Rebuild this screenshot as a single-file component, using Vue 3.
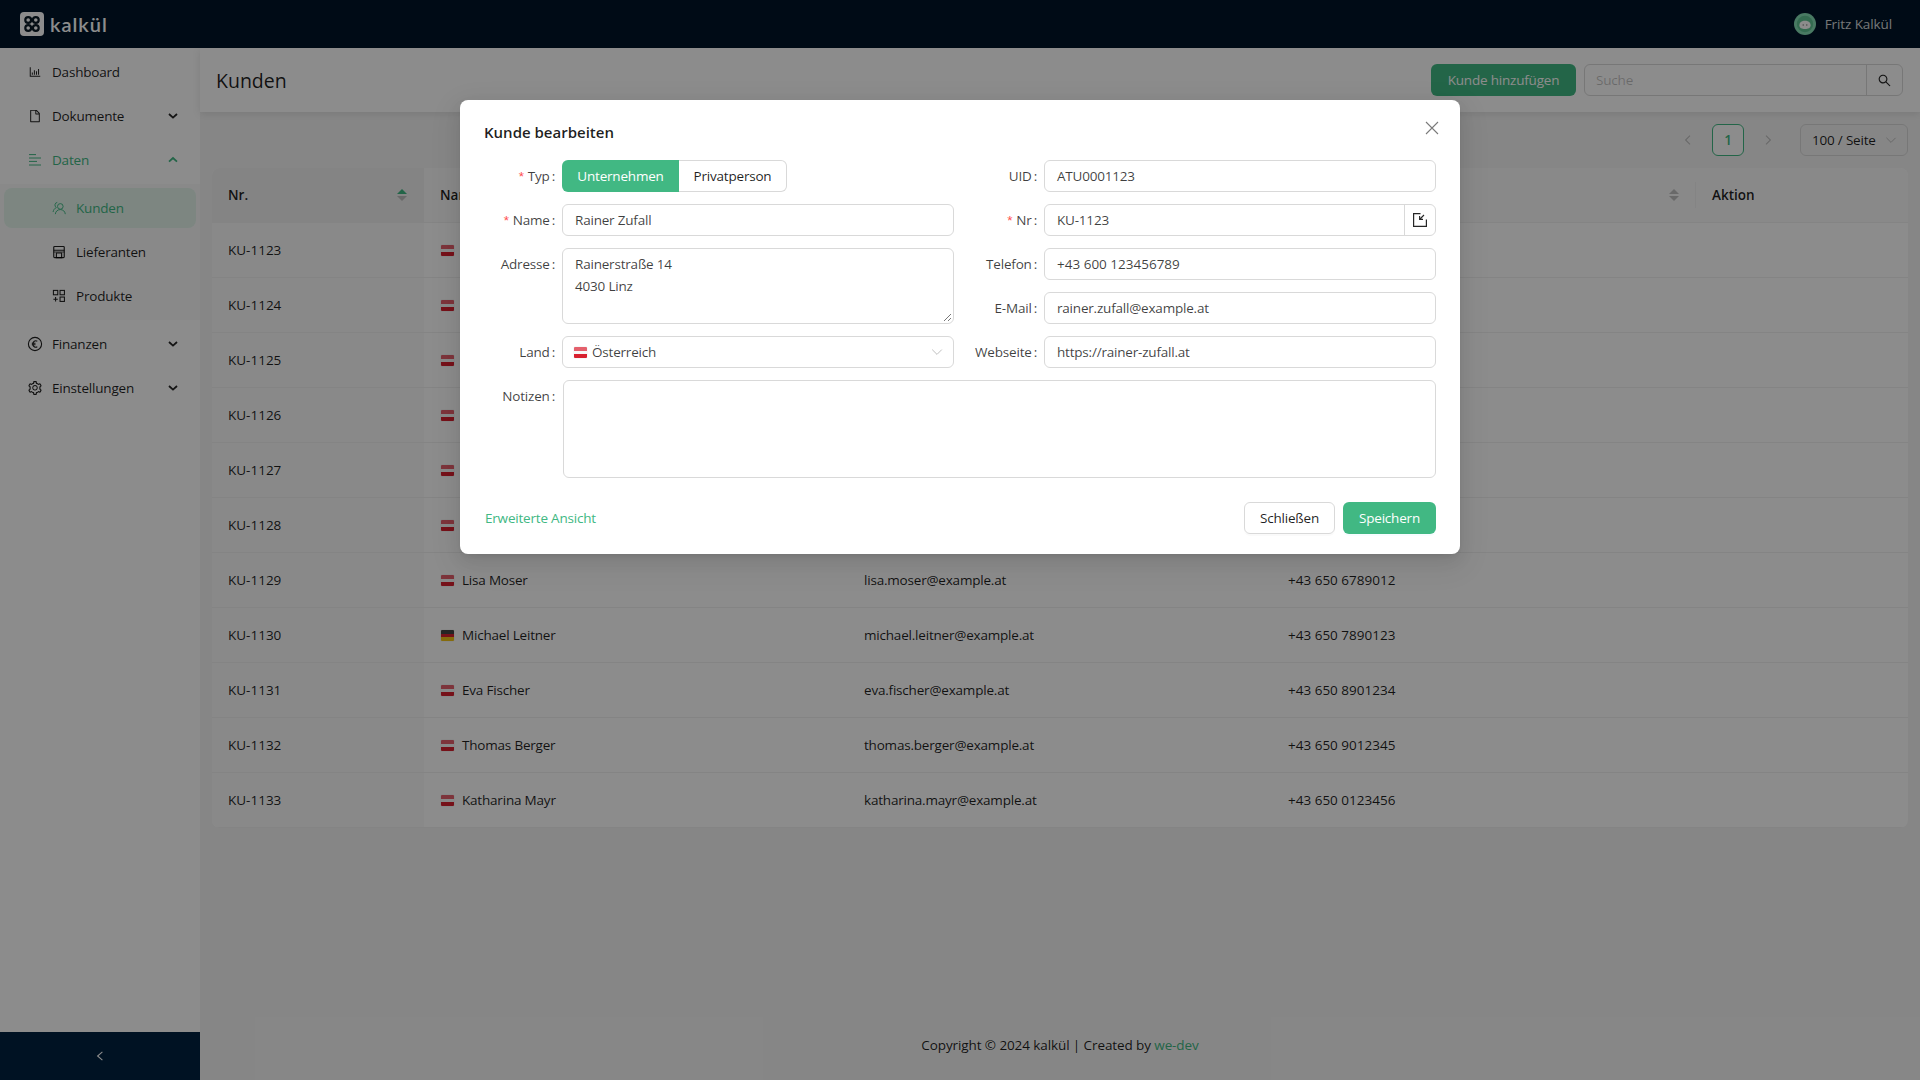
<script setup>
const menuTop = [
  { label: 'Dashboard', icon: 'chart' },
  { label: 'Dokumente', icon: 'file', arrow: 'down' },
]
const subItems = [
  { label: 'Kunden', icon: 'users', active: true },
  { label: 'Lieferanten', icon: 'shop' },
  { label: 'Produkte', icon: 'product' },
]
const menuBottom = [
  { label: 'Finanzen', icon: 'euro', arrow: 'down' },
  { label: 'Einstellungen', icon: 'gear', arrow: 'down' },
]
/* Rows 1123-1128 lie behind the dialog: only their number and flag can be seen. */
const rows = [
  ['KU-1123', 'at', '', '', ''],
  ['KU-1124', 'at', '', '', ''],
  ['KU-1125', 'at', '', '', ''],
  ['KU-1126', 'at', '', '', ''],
  ['KU-1127', 'at', '', '', ''],
  ['KU-1128', 'at', '', '', ''],
  ['KU-1129', 'at', 'Lisa Moser', 'lisa.moser@example.at', '+43 650 6789012'],
  ['KU-1130', 'de', 'Michael Leitner', 'michael.leitner@example.at', '+43 650 7890123'],
  ['KU-1131', 'at', 'Eva Fischer', 'eva.fischer@example.at', '+43 650 8901234'],
  ['KU-1132', 'at', 'Thomas Berger', 'thomas.berger@example.at', '+43 650 9012345'],
  ['KU-1133', 'at', 'Katharina Mayr', 'katharina.mayr@example.at', '+43 650 0123456'],
]
const paths = {
  chart: 'M888 792H200V168c0-4.4-3.6-8-8-8h-56c-4.4 0-8 3.6-8 8v688c0 4.4 3.6 8 8 8h752c4.4 0 8-3.6 8-8v-56c0-4.4-3.6-8-8-8zm-600-80h56c4.4 0 8-3.6 8-8V560c0-4.4-3.6-8-8-8h-56c-4.4 0-8 3.6-8 8v144c0 4.4 3.6 8 8 8zm152 0h56c4.4 0 8-3.6 8-8V384c0-4.4-3.6-8-8-8h-56c-4.4 0-8 3.6-8 8v320c0 4.4 3.6 8 8 8zm152 0h56c4.4 0 8-3.6 8-8V462c0-4.4-3.6-8-8-8h-56c-4.4 0-8 3.6-8 8v242c0 4.4 3.6 8 8 8zm152 0h56c4.4 0 8-3.6 8-8V304c0-4.4-3.6-8-8-8h-56c-4.4 0-8 3.6-8 8v400c0 4.4 3.6 8 8 8z',
  file: 'M854.6 288.6L639.4 73.4c-6-6-14.1-9.4-22.6-9.4H192c-17.7 0-32 14.3-32 32v832c0 17.7 14.3 32 32 32h640c17.7 0 32-14.3 32-32V311.3c0-8.5-3.4-16.7-9.4-22.7zM790.2 326H602V137.8L790.2 326zm1.8 562H232V136h302v216a42 42 0 0042 42h216v494z',
  gear: 'M924.8 625.7l-65.5-56c3.1-19 4.7-38.4 4.7-57.8s-1.6-38.8-4.7-57.8l65.5-56a32.03 32.03 0 009.3-35.2l-.9-2.6a443.74 443.74 0 00-79.7-137.9l-1.8-2.1a32.12 32.12 0 00-35.1-9.5l-81.3 28.9c-30-24.6-63.5-44-99.7-57.6l-15.7-85a32.05 32.05 0 00-25.8-25.7l-2.7-.5c-52.1-9.4-106.9-9.4-159 0l-2.7.5a32.05 32.05 0 00-25.8 25.7l-15.8 85.4a351.86 351.86 0 00-99 57.4l-81.9-29.1a32 32 0 00-35.1 9.5l-1.8 2.1a446.02 446.02 0 00-79.7 137.9l-.9 2.6c-4.5 12.5-.8 26.5 9.3 35.2l66.3 56.6c-3.1 18.8-4.6 38-4.6 57.1 0 19.2 1.5 38.4 4.6 57.1L99 625.5a32.03 32.03 0 00-9.3 35.2l.9 2.6c18.1 50.4 44.9 96.9 79.7 137.9l1.8 2.1a32.12 32.12 0 0035.1 9.5l81.9-29.1c29.8 24.5 63.1 43.9 99 57.4l15.8 85.4a32.05 32.05 0 0025.8 25.7l2.7.5a449.4 449.4 0 00159 0l2.7-.5a32.05 32.05 0 0025.8-25.7l15.7-85a350 350 0 0099.7-57.6l81.3 28.9a32 32 0 0035.1-9.5l1.8-2.1c34.8-41.1 61.6-87.5 79.7-137.9l.9-2.6c4.5-12.3.8-26.3-9.3-35zM788.3 465.9c2.5 15.1 3.8 30.6 3.8 46.1s-1.3 31-3.8 46.1l-6.6 40.1 74.7 63.9a370.03 370.03 0 01-42.6 73.6L721 702.8l-31.4 25.8c-23.9 19.6-50.5 35-79.3 45.8l-38.1 14.3-17.9 97a377.5 377.5 0 01-85 0l-17.9-97.2-37.8-14.5c-28.5-10.8-55-26.2-78.7-45.7l-31.4-25.9-93.4 33.2c-17-22.9-31.2-47.6-42.6-73.6l75.5-64.5-6.5-40c-2.4-14.9-3.7-30.3-3.7-45.5 0-15.3 1.2-30.6 3.7-45.5l6.5-40-75.5-64.5c11.3-26.1 25.6-50.7 42.6-73.6l93.4 33.2 31.4-25.9c23.7-19.5 50.2-34.9 78.7-45.7l37.9-14.3 17.9-97.2c28.1-3.2 56.8-3.2 85 0l17.9 97 38.1 14.3c28.7 10.8 55.4 26.2 79.3 45.8l31.4 25.8 92.8-32.9c17 22.9 31.2 47.6 42.6 73.6L781.8 426l6.5 39.9zM512 326c-97.2 0-176 78.8-176 176s78.8 176 176 176 176-78.8 176-176-78.8-176-176-176zm79.2 255.2A111.6 111.6 0 01512 614c-29.9 0-58-11.7-79.2-32.8A111.6 111.6 0 01400 502c0-29.9 11.7-58 32.8-79.2C454 401.6 482.1 390 512 390c29.9 0 58 11.6 79.2 32.8A111.6 111.6 0 01624 502c0 29.9-11.7 58-32.8 79.2z',
  search: 'M909.6 854.5L649.9 594.8C690.2 542.7 712 479 712 412c0-80.2-31.3-155.4-87.9-212.1-56.6-56.7-132-87.9-212.1-87.9s-155.5 31.3-212.1 87.9C143.2 256.5 112 331.8 112 412c0 80.1 31.3 155.5 87.9 212.1C256.5 680.8 331.8 712 412 712c67 0 130.6-21.8 182.7-62l259.7 259.6a8.2 8.2 0 0011.6 0l43.6-43.5a8.2 8.2 0 000-11.6zM570.4 570.4C528 612.7 471.8 636 412 636s-116-23.3-158.4-65.6C211.3 528 188 471.8 188 412s23.3-116.1 65.6-158.4C296 211.3 352.2 188 412 188s116.1 23.2 158.4 65.6S636 352.2 636 412s-23.3 116.1-65.6 158.4z',
}
</script>

<template>
  <div class="app">
    <header class="topbar">
      <div class="brand">
        <span class="logo">
          <svg viewBox="0 0 24 24" width="24" height="24" fill="none" stroke="#0a1a26" stroke-width="2.2">
            <circle cx="8.2" cy="8" r="2.9" /><circle cx="15.8" cy="8" r="2.9" />
            <circle cx="8.2" cy="16" r="2.9" /><circle cx="15.8" cy="16" r="2.9" />
          </svg>
        </span>
        <span class="brand-name">kalkül</span>
      </div>
      <div class="user">
        <svg class="avatar" viewBox="0 0 22 22" width="22" height="22">
          <circle cx="11" cy="11" r="11" fill="#86deb4" />
          <circle cx="11" cy="11" r="8.2" fill="#5fc493" />
          <path d="M5.4 12.2c0-2.9 2.5-4.4 5.6-4.4s5.6 1.5 5.6 4.4-2.5 3.8-5.6 3.8-5.6-.9-5.6-3.8z" fill="#fff" />
          <circle cx="9.2" cy="12" r=".7" fill="#777" /><circle cx="12.8" cy="12" r=".7" fill="#777" />
        </svg>
        <span>Fritz Kalkül</span>
      </div>
    </header>

    <div class="body">
      <aside class="sider">
        <nav class="menu">
          <div v-for="m in menuTop" :key="m.label" class="item">
            <svg v-if="m.icon === 'chart'" class="ico" viewBox="0 0 1024 1024"><path :d="paths.chart" /></svg>
            <svg v-else class="ico" viewBox="0 0 1024 1024"><path :d="paths.file" /></svg>
            <span class="item-label">{{ m.label }}</span>
            <svg v-if="m.arrow" class="arrow" viewBox="0 0 12 12"><path d="M2 4l4 3.6L10 4" /></svg>
          </div>

          <div class="item open">
            <svg class="ico" viewBox="0 0 14 14" fill="none" stroke="currentColor" stroke-width="1">
              <path d="M1 1.6h7M1 5h12M1 8.4h8M1 12h12" />
            </svg>
            <span class="item-label">Daten</span>
            <svg class="arrow" viewBox="0 0 12 12"><path d="M2 7.6L6 4l4 3.6" /></svg>
          </div>
          <div class="sub">
            <div v-for="s in subItems" :key="s.label" class="item subitem" :class="{ active: s.active }">
              <svg v-if="s.icon === 'users'" class="ico" viewBox="0 0 16 16" fill="none" stroke="currentColor" stroke-width="1.1">
                <circle cx="9.5" cy="6.2" r="3.2" />
                <path d="M3.8 15c.3-3.2 2.7-5.2 5.7-5.2s5.4 2 5.7 5.2" />
                <path d="M6 1.6a3.1 3.1 0 00-1 5.8C3 8.4 1.6 10.2 1.2 12.6" />
              </svg>
              <svg v-else-if="s.icon === 'shop'" class="ico" viewBox="0 0 16 16" fill="none" stroke="currentColor" stroke-width="1.3">
                <rect x="2" y="1.7" width="12" height="12.8" rx="1" />
                <path d="M2 6h12M5 9.2v5.3h6V9.2H5z" />
                <path d="M2 8h12" stroke-width=".9" />
              </svg>
              <svg v-else class="ico" viewBox="0 0 16 16" fill="none" stroke="currentColor" stroke-width="1.2">
                <rect x="1.6" y="1.6" width="5" height="5" /><rect x="9.2" y="1.6" width="5" height="5" />
                <rect x="9.2" y="9.2" width="5" height="5" />
                <path d="M4.1 9.2v5.2M1.6 11.8h5" />
              </svg>
              <span class="item-label">{{ s.label }}</span>
            </div>
          </div>

          <div v-for="m in menuBottom" :key="m.label" class="item">
            <svg v-if="m.icon === 'euro'" class="ico ico-big" viewBox="0 0 16 16" fill="none" stroke="currentColor" stroke-width="1.1">
              <circle cx="8" cy="8" r="6.6" />
              <path d="M10.3 5.2A2.9 2.9 0 005.9 8a2.9 2.9 0 004.4 2.8M4.8 7.2h3.7M4.8 8.8h3.7" />
            </svg>
            <svg v-else class="ico ico-big" viewBox="0 0 1024 1024"><path :d="paths.gear" /></svg>
            <span class="item-label">{{ m.label }}</span>
            <svg class="arrow" viewBox="0 0 12 12"><path d="M2 4l4 3.6L10 4" /></svg>
          </div>
        </nav>
        <div class="trigger">
          <svg viewBox="0 0 12 12" width="12" height="12" fill="none" stroke="#fff" stroke-width="1.1"><path d="M8.4 1.8L3.6 6l4.8 4.2" /></svg>
        </div>
      </aside>

      <main class="main">
        <div class="page-head">
          <h1 class="page-title">Kunden</h1>
          <div class="head-actions">
            <div class="btn-add">Kunde hinzufügen</div>
            <div class="search">
              <span class="search-ph">Suche</span>
              <span class="search-btn"><svg viewBox="0 0 1024 1024" width="15" height="15" fill="#262626"><path :d="paths.search" /></svg></span>
            </div>
          </div>
        </div>

        <section class="content">
          <div class="pager">
            <svg class="pg-arrow" viewBox="0 0 12 12"><path d="M8 1.6L3.6 6 8 10.4" /></svg>
            <span class="pg-num">1</span>
            <svg class="pg-arrow" viewBox="0 0 12 12"><path d="M4 1.6L8.4 6 4 10.4" /></svg>
            <div class="pg-size">
              <span>100 / Seite</span>
              <svg viewBox="0 0 12 12" width="12" height="12" fill="none" stroke="#bfbfbf" stroke-width="1"><path d="M1.4 3.8L6 8.4l4.6-4.6" /></svg>
            </div>
          </div>

          <div class="table">
            <div class="tr thead">
              <div class="th sorted">Nr.
                <span class="sorter"><i class="up on"></i><i class="down"></i></span>
              </div>
              <div class="th">Name</div>
              <div class="th">E-Mail</div>
              <div class="th">Telefon
                <span class="sorter"><i class="up"></i><i class="down"></i></span>
              </div>
              <div class="th">Aktion</div>
            </div>
            <div v-for="r in rows" :key="r[0]" class="tr">
              <div class="td sorted num">{{ r[0] }}</div>
              <div class="td name"><span class="flag" :class="r[1]"></span>{{ r[2] }}</div>
              <div class="td">{{ r[3] }}</div>
              <div class="td num">{{ r[4] }}</div>
              <div class="td"></div>
            </div>
          </div>
        </section>

        <footer class="footer"><span>Copyright © 2024 kalkül | Created by <span class="link">we-dev</span></span></footer>
      </main>
    </div>

    <div class="mask"></div>

    <div class="modal">
      <svg class="close" viewBox="0 0 14 14" width="14" height="14" fill="none" stroke="#7a7a7a" stroke-width="1.1"><path d="M1 1l12 12M13 1L1 13" /></svg>
      <h2 class="modal-title">Kunde bearbeiten</h2>

      <div class="form">
        <label class="lab"><em>*</em>Typ<b>:</b></label>
        <div class="radio">
          <span class="radio-on">Unternehmen</span>
          <span class="radio-off">Privatperson</span>
        </div>
        <label class="lab">UID<b>:</b></label>
        <div class="inp">ATU0001123</div>

        <label class="lab"><em>*</em>Name<b>:</b></label>
        <div class="inp">Rainer Zufall</div>
        <label class="lab"><em>*</em>Nr<b>:</b></label>
        <div class="inp group">
          <span class="group-text">KU-1123</span>
          <span class="group-btn">
            <svg viewBox="0 0 16 16" width="16" height="16" fill="none" stroke="#262626" stroke-width="1.2">
              <path d="M8.5 1.6H1.6v12.8h12.8V7.5" /><path d="M12 3L8 7M7.6 4v3.4H11" stroke-width="1.1" />
            </svg>
          </span>
        </div>

        <label class="lab span2">Adresse<b>:</b></label>
        <div class="inp area span2">
          <div>Rainerstraße 14</div>
          <div>4030 Linz</div>
          <svg class="grip" viewBox="0 0 10 10" width="10" height="10" stroke="#555" stroke-width=".8"><path d="M9 2L2 9M9 6L6 9" /></svg>
        </div>
        <label class="lab">Telefon<b>:</b></label>
        <div class="inp num">+43 600 123456789</div>

        <label class="lab col3">E-Mail<b>:</b></label>
        <div class="inp">rainer.zufall@example.at</div>

        <label class="lab">Land<b>:</b></label>
        <div class="inp select">
          <span class="flag at"></span><span class="select-val">Österreich</span>
          <svg viewBox="0 0 12 12" width="12" height="12" fill="none" stroke="#bfbfbf" stroke-width="1"><path d="M1.2 3.6L6 8.4l4.8-4.8" /></svg>
        </div>
        <label class="lab">Webseite<b>:</b></label>
        <div class="inp">https://rainer-zufall.at</div>

        <label class="lab">Notizen<b>:</b></label>
        <div class="inp notes"></div>
      </div>

      <div class="modal-foot">
        <span class="adv">Erweiterte Ansicht</span>
        <div class="foot-btns">
          <span class="btn ghost">Schließen</span>
          <span class="btn primary">Speichern</span>
        </div>
      </div>
    </div>
  </div>
</template>

<style scoped>
.app {
  --green: #41b883;
  height: 100vh;
  display: flex;
  flex-direction: column;
  position: relative;
  overflow: hidden;
  font-family: "Open Sans", "Noto Sans", sans-serif;
  font-size: 13.5px;
  letter-spacing: -0.2px;
  color: rgba(0, 0, 0, 0.88);
  background: #f5f5f5;
}
.num { letter-spacing: 0; }
.topbar {
  height: 48px;
  flex: none;
  background: #001529;
  display: flex;
  align-items: center;
  justify-content: space-between;
  padding: 0 28px 0 20px;
}
.brand { display: flex; align-items: center; gap: 6px; }
.logo { width: 24px; height: 24px; background: #fff; border-radius: 4px; display: block; }
.logo svg { display: block; }
.brand-name { color: #fff; font: 600 20px/24px Lato, sans-serif; letter-spacing: 1px; }
.user { display: flex; align-items: center; gap: 9px; letter-spacing: -0.1px; color: rgba(255, 255, 255, 0.85); }
.avatar { display: block; }
.body { flex: 1; display: flex; min-height: 0; }
.sider { width: 200px; flex: none; background: #fff; display: flex; flex-direction: column; }
.menu { flex: 1; padding-top: 4px; }
.item {
  height: 40px;
  margin: 0 4px 4px;
  padding: 0 17px 0 24px;
  display: flex;
  align-items: center;
  border-radius: 8px;
}
.item.open { color: var(--green); }
.item.open .arrow { stroke: var(--green); }
.ico { width: 14px; height: 14px; flex: none; fill: currentColor; margin-right: 10px; }
svg.ico[fill="none"] { fill: none; }
.ico-big { width: 16px; height: 16px; margin: 0 9px 0 -1px; }
.item-label { flex: 1; }
.arrow { width: 12px; height: 12px; fill: none; stroke: #262626; stroke-width: 1.8; flex: none; }
.sub { display: flow-root; background: rgba(0, 0, 0, 0.02); padding-top: 4px; margin-bottom: 4px; }
.subitem { padding-left: 48px; }
.subitem.active { background: #e3f5ec; color: var(--green); }
.trigger {
  height: 48px;
  flex: none;
  background: #002140;
  display: flex;
  align-items: center;
  justify-content: center;
}
.main { flex: 1; min-width: 0; display: flex; flex-direction: column; }
.page-head {
  height: 64px;
  flex: none;
  background: #fff;
  box-shadow: 0 2px 8px rgba(0, 0, 0, 0.1);
  display: flex;
  align-items: center;
  justify-content: space-between;
  padding: 0 17px 0 16px;
  position: relative;
}
.page-title { margin: 0; font-size: 19.5px; font-weight: 500; letter-spacing: 0; }
.head-actions { display: flex; gap: 8px; }
.btn-add {
  width: 145px;
  height: 32px;
  background: var(--green);
  color: #fff;
  border-radius: 6px;
  display: flex;
  align-items: center;
  justify-content: center;
}
.search {
  width: 319px;
  height: 32px;
  box-sizing: border-box;
  border: 1px solid #d9d9d9;
  border-radius: 6px;
  background: #fff;
  display: flex;
  align-items: center;
}
.search-ph { flex: 1; padding-left: 11px; color: rgba(0, 0, 0, 0.25); }
.search-btn {
  width: 36px;
  height: 30px;
  box-sizing: border-box;
  border-left: 1px solid #d9d9d9;
  display: flex;
  align-items: center;
  justify-content: center;
}
.content { flex: 1; padding: 12px 12px 0; min-height: 0; }
.pager { height: 32px; display: flex; align-items: center; justify-content: flex-end; margin-bottom: 12px; }
.pg-arrow { width: 12px; height: 12px; fill: none; stroke: #bfbfbf; stroke-width: 1.1; margin: 0 18px; }
.pg-num {
  width: 32px;
  height: 32px;
  box-sizing: border-box;
  border: 1px solid var(--green);
  border-radius: 6px;
  background: #fff;
  color: var(--green);
  font-weight: 600;
  display: flex;
  align-items: center;
  justify-content: center;
}
.pg-size {
  width: 108px;
  height: 32px;
  box-sizing: border-box;
  margin-left: 8px;
  padding: 0 10px 0 11px;
  border: 1px solid #d9d9d9;
  border-radius: 6px;
  display: flex;
  align-items: center;
  justify-content: space-between;
}
.table { border-radius: 8px; overflow: hidden; }
.tr {
  display: grid;
  grid-template-columns: 212px 424px 424px 424px 212px;
  height: 55px;
  border-bottom: 1px solid #f0f0f0;
  box-sizing: border-box;
  background: #fff;
}
.th, .td { display: flex; align-items: center; padding: 0 16px; position: relative; }
.th { background: #fafafa; font-weight: 600; letter-spacing: 0; }
.th:nth-child(4)::after {
  content: "";
  position: absolute;
  right: 0;
  top: 14px;
  bottom: 14px;
  width: 1px;
  background: #f0f0f0;
}
.th.sorted { background: #f0f0f0; }
.td.sorted { background: #fafafa; }
.sorter { margin-left: auto; margin-right: 1px; display: flex; flex-direction: column; gap: 2px; }
.sorter i { display: block; width: 0; height: 0; border-left: 5px solid transparent; border-right: 5px solid transparent; }
.sorter .up { border-bottom: 5px solid #bfbfbf; }
.sorter .down { border-top: 5px solid #bfbfbf; }
.sorter .up.on { border-bottom-color: var(--green); }
.flag {
  width: 13px;
  height: 11px;
  flex: none;
  margin-right: 9px;
  border-radius: 1px;
  display: inline-block;
}
.name .flag { margin-left: 1px; margin-right: 8px; }
.flag.at { background: linear-gradient(#e4606c 0 33%, #f7f7f7 33% 66%, #d8202f 66%); box-shadow: 0 0 1px rgba(0,0,0,.3); }
.flag.de { background: linear-gradient(#444 0 33%, #d8202f 33% 66%, #f3c316 66%); box-shadow: 0 0 1px rgba(0,0,0,.3); }
.footer { height: 70px; flex: none; display: flex; align-items: center; justify-content: center; letter-spacing: -0.1px; }
.link { color: var(--green); }
.mask { position: absolute; inset: 0; background: rgba(0, 0, 0, 0.45); }
.modal {
  position: absolute;
  left: 460px;
  top: 100px;
  width: 1000px;
  height: 454px;
  box-sizing: border-box;
  padding: 20px 24px;
  background: #fff;
  border-radius: 8px;
  box-shadow: 0 6px 16px rgba(0, 0, 0, 0.08), 0 3px 6px -4px rgba(0, 0, 0, 0.12), 0 9px 28px 8px rgba(0, 0, 0, 0.05);
  color: rgba(0, 0, 0, 0.88);
}
.close { position: absolute; right: 21px; top: 21px; }
.modal-title { margin: 0; font-size: 15px; line-height: 24px; font-weight: 600; height: 40px; letter-spacing: 0; }
.form {
  display: grid;
  grid-template-columns: 78px 392px 90px 392px;
  grid-template-rows: 32px 32px 32px 32px 32px 98px;
  row-gap: 12px;
}
.lab { display: flex; align-items: center; justify-content: flex-end; padding-right: 7px; height: 32px; color: rgba(0, 0, 0, 0.75); }
.lab em { color: #ff4d4f; font-style: normal; margin-right: 4px; font-family: "Liberation Sans", sans-serif; }
.lab b { font-weight: 400; margin-left: 2px; }
.inp {
  box-sizing: border-box;
  height: 32px;
  border: 1px solid #d9d9d9;
  border-radius: 6px;
  padding: 0 11px 0 12px;
  display: flex;
  align-items: center;
  background: #fff;
  color: rgba(0, 0, 0, 0.75);
}
.span2 { grid-row: span 2; }
.col3 { grid-column: 3; }
.area { height: 76px; display: block; padding: 4px 11px 4px 12px; line-height: 22px; position: relative; }
.grip { position: absolute; right: 1px; bottom: 1px; }
.group { padding-right: 0; }
.group-text { flex: 1; }
.group-btn {
  width: 30px;
  height: 30px;
  border-left: 1px solid #d9d9d9;
  display: flex;
  align-items: center;
  justify-content: center;
}
.select { padding: 0 10px 0 11px; }
.select .flag { margin-right: 5px; }
.select-val { flex: 1; }
.notes { grid-column: 2 / span 3; height: 98px; margin-left: 1px; }
.radio { display: flex; height: 32px; }
.radio-on {
  width: 117px;
  background: var(--green);
  color: #fff;
  border-radius: 6px 0 0 6px;
  display: flex;
  align-items: center;
  justify-content: center;
}
.radio-off {
  width: 108px;
  box-sizing: border-box;
  border: 1px solid #d9d9d9;
  border-left: 0;
  border-radius: 0 6px 6px 0;
  display: flex;
  align-items: center;
  justify-content: center;
}
.modal-foot { display: flex; align-items: center; justify-content: space-between; margin-top: 24px; padding-left: 1px; }
.adv { color: var(--green); }
.foot-btns { display: flex; gap: 8px; }
.btn {
  height: 32px;
  box-sizing: border-box;
  border-radius: 6px;
  display: flex;
  align-items: center;
  justify-content: center;
}
.ghost { width: 91px; border: 1px solid #d9d9d9; box-shadow: 0 2px 0 rgba(0, 0, 0, 0.02); }
.primary { width: 93px; background: var(--green); color: #fff; box-shadow: 0 2px 0 rgba(5, 145, 255, 0.03); }
</style>

<style>
html, body { margin: 0; overflow: hidden; }
</style>
